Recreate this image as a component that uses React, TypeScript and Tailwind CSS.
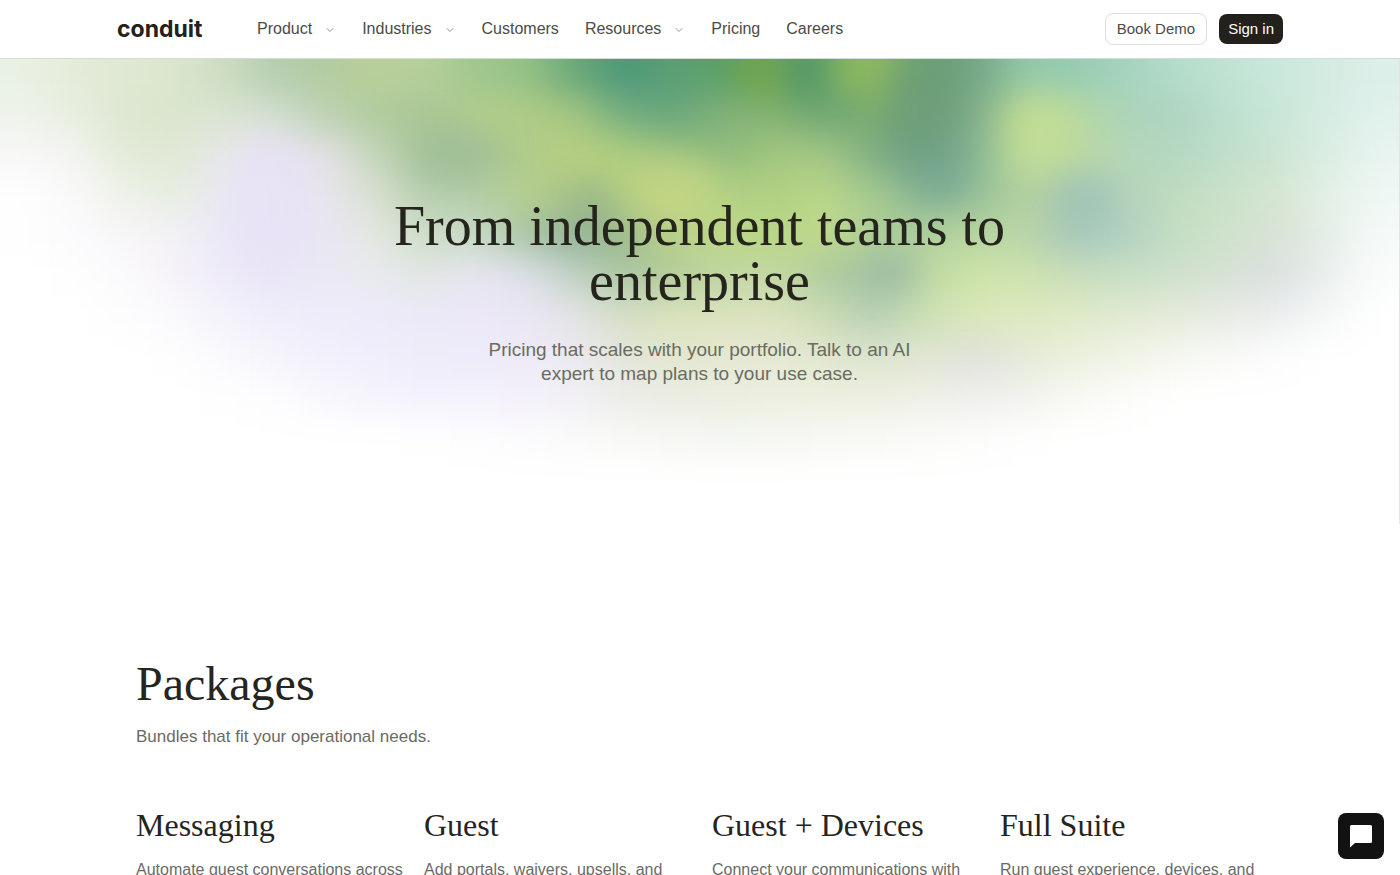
import { ChevronDown } from "lucide-react";

const NAV_ITEMS = [
  { label: "Product", menu: true },
  { label: "Industries", menu: true },
  { label: "Customers", menu: false },
  { label: "Resources", menu: true },
  { label: "Pricing", menu: false },
  { label: "Careers", menu: false },
];

const PACKAGES = [
  { name: "Messaging", text: "Automate guest conversations across" },
  { name: "Guest", text: "Add portals, waivers, upsells, and" },
  { name: "Guest + Devices", text: "Connect your communications with" },
  { name: "Full Suite", text: "Run guest experience, devices, and" },
];

// colour mesh for the hero, one row per 40 units, one colour per 50 units
const MESH = [
  "e9f1e4 e4ecd9 dfe8d2 dce6cf cddcc0 b4cdb0 b3cca0 b9cf98 b7d09a 9fc78f 95c286 6aa878 4b977a 5aa074 5b9f68 76a855 5f9f6c 8eb85f 6aa176 71a583 94c8a9 96ccb2 a4d3bd b3dccb bfe2d3 c9e8db d3ebe0 ddefe9",
  "eef3ea e8eee0 dce7d0 dae5cd dbe5d3 d3dfd0 bed1b4 b0cb9e a9c695 b4ce8d b2cd86 a5c784 74ad80 6aa67c 84b37b 84b373 6fa775 7aac70 719f7a 80ae8c bcd991 b8d9a0 add3b8 aed3bf bcdfcd c8e6d8 d5ece2 e1f1ec",
  "f8f8f8 f4f4f2 e2ebd7 e0e9d4 e8e7ea e6e2f2 e4e2e6 c6d6bb a6c49a a0bf96 b0cb8b b9d07f b2cf7f 9fc481 8fbb7c a3c87f a5c885 7fae85 71a38c 86b594 bfdc98 bcd99f b4d6b8 b5d8c3 bedec9 cbe5d2 daede1 e9f4f0",
  "fefefe fbf9fb eef1e8 e7eee1 eae8f4 e7e2f5 e9e6f0 d8e0d1 b7cfae b3cda9 b6cf8f a8c386 b9d081 c6d784 b5d286 b0d082 bbd78a a4ca90 87b394 96be99 b3d19f a9c9b0 b2d2bb bfdcbf cae1c9 d6e5d0 e2efe5 eff7f4",
  "fefefe fcfbfd f8f6f8 f2f1f5 ebe8f7 e7e3f5 e9e6f2 e5e8e1 ccdcc8 c9dbc7 a8c4a4 93b39a 9dbb8d bbd286 bdd688 bad785 c0d98c b0cf96 b0d09c b8d5a0 bbd6a8 a6c7bc b0d0c2 c3dec3 cfe3cb d8e2d5 e4ede6 f5faf8",
  "ffffff fefefe fbfafc f5f3f8 eeebf9 eae7f7 ebe9f6 e9eaef e2e7e2 e7e5f2 e0e0ec c0d2c2 abc5a2 b3cd9b c0d6a4 c2d7a2 b0cca0 a0c0a2 bdd8a4 cfe4a8 cfe3ae c9deba c9dfc5 cfe0cb d6e1d5 dbe0df e9efed fafcfb",
  "ffffff ffffff fdfdfe faf9fc f4f2fb efedfa eeecfa edebfa ece9f8 ece8f8 ebe7f5 e4e4e6 d5dfc5 dbe3bd dbe3bd dce3c1 cbdbb4 b7cfb4 cce0b4 dae8ba dde9c0 e0eac8 e1ead1 e5ebda e8ebe4 ebedee f6f7f7 ffffff",
  "ffffff ffffff ffffff fefefe faf9fd f5f4fc f2f0fb f0eefb efecfa eeebfa eeebf8 ebe9f2 e3e6d8 e3e7cf e5e8d2 e6e8d3 e1e8cf dbe4cd e0e6d2 dee0da e5ead8 ebf0dc f0f3e6 f5f7ef f9faf7 fcfcfc ffffff ffffff",
  "ffffff ffffff ffffff ffffff fefefe fdfcfe f8f7fd f5f3fc f3f1fc f3f1fb f3f0fa f1eff5 ebece6 eaece2 ebeddf ecefdf ecefde edefe1 eeefe5 efeeee f1f2ec f8f9f3 fcfcfa ffffff ffffff ffffff ffffff ffffff",
  "ffffff ffffff ffffff ffffff ffffff ffffff ffffff ffffff fefeff fdfdfe fcfbfd fafafa f8f8f6 f6f7f3 f4f6f2 f5f6f2 f7f8f4 f8f9f5 fafaf8 fcfcfb fefefe ffffff ffffff ffffff ffffff ffffff ffffff ffffff",
  "ffffff ffffff ffffff ffffff ffffff ffffff ffffff ffffff ffffff ffffff ffffff ffffff ffffff ffffff ffffff ffffff ffffff ffffff ffffff ffffff ffffff ffffff ffffff ffffff ffffff ffffff ffffff ffffff",
].map((row) => row.split(" "));

const SPOTS = [
  { x: 757, y: 8, rx: 20, ry: 30, color: "#70a548" },
  { x: 803, y: 10, rx: 18, ry: 34, color: "#48906a" },
  { x: 855, y: 6, rx: 22, ry: 26, color: "#96be5c" },
  { x: 925, y: 50, rx: 34, ry: 60, color: "#6b9c78" },
  { x: 942, y: 115, rx: 26, ry: 24, color: "#72a590" },
  { x: 1042, y: 72, rx: 30, ry: 34, color: "#c6df95" },
  { x: 1086, y: 140, rx: 28, ry: 26, color: "#9dc0b8" },
  { x: 895, y: 212, rx: 22, ry: 24, color: "#98b8a4" },
  { x: 594, y: 148, rx: 22, ry: 26, color: "#8fb08c" },
  { x: 450, y: 92, rx: 34, ry: 30, color: "#9fbe98" },
  { x: 680, y: 122, rx: 40, ry: 20, color: "#c6d784" },
  { x: 268, y: 150, rx: 36, ry: 76, color: "#e8e2f6" },
];

function HeroGradient() {
  return (
    <svg
      className="absolute inset-0 h-full w-full"
      viewBox="0 0 1400 464"
      preserveAspectRatio="none"
      aria-hidden="true"
    >
      <defs>
        <filter
          id="mesh"
          filterUnits="userSpaceOnUse"
          x="-150"
          y="-100"
          width="1700"
          height="700"
          colorInterpolationFilters="sRGB"
        >
          <feGaussianBlur stdDeviation="22 17" />
        </filter>
        <filter
          id="spots"
          filterUnits="userSpaceOnUse"
          x="-150"
          y="-100"
          width="1700"
          height="700"
          colorInterpolationFilters="sRGB"
        >
          <feGaussianBlur stdDeviation="15" />
        </filter>
      </defs>
      <g filter="url(#mesh)">
        {MESH.map((row, r) =>
          row.map((color, c) => {
            // the outer cells run past the edge, so that the blur stays opaque there
            const left = c === 0 ? -100 : c * 50;
            const right = c === row.length - 1 ? 1500 : c * 50 + 51;
            const top = r === 0 ? -80 : r * 40 - 4;
            const bottom = r === MESH.length - 1 ? 560 : r * 40 + 37;
            return (
              <rect
                key={r + "-" + c}
                x={left}
                y={top}
                width={right - left}
                height={bottom - top}
                fill={"#" + color}
              />
            );
          })
        )}
      </g>
      <g filter="url(#spots)" opacity="0.6">
        {SPOTS.map((s) => (
          <ellipse key={s.x} cx={s.x} cy={s.y} rx={s.rx} ry={s.ry} fill={s.color} />
        ))}
      </g>
    </svg>
  );
}

function Header() {
  return (
    <header className="border-b border-[#d5dcd7] bg-white">
      <div className="mx-auto flex h-[58px] max-w-[1166px] items-center">
        <a
          href="#"
          className="w-[140px] font-[Inter,sans-serif] text-[23px] leading-[30px] font-bold text-[#22211c]"
        >
          conduit
        </a>
        <nav className="flex items-center gap-[26px] text-base text-[#4b4b47]">
          {NAV_ITEMS.map((item) =>
            item.menu ? (
              <button key={item.label} className="flex items-center gap-3">
                {item.label}
                <ChevronDown size={12} strokeWidth={2} className="mt-[2px] text-[#94948f]" />
              </button>
            ) : (
              <a key={item.label} href="#">
                {item.label}
              </a>
            )
          )}
        </nav>
        <div className="ml-auto flex items-center gap-3">
          <button className="h-8 rounded-lg border border-[#dededc] px-[11px] text-[15px] text-[#4b4b47]">
            Book Demo
          </button>
          <button className="h-[30px] rounded-lg bg-[#22211c] px-[9px] text-[15px] text-white">Sign in</button>
        </div>
      </div>
    </header>
  );
}

export default function App() {
  return (
    <div className="h-screen overflow-hidden bg-white font-['Liberation_Sans',Arial,sans-serif]">
      <Header />
      <section className="relative h-[465px] border-r border-[#e3e6e4]">
        <HeroGradient />
        <div className="relative mx-auto max-w-[700px] pt-[140px] text-center">
          <h1 className="font-['Liberation_Serif',serif] text-[56px] leading-[55px] text-[#25251d]">
            From independent teams to enterprise
          </h1>
          <p className="mx-auto mt-[29px] max-w-[460px] text-[19px] leading-6 text-[#6a6c62]">
            Pricing that scales with your portfolio. Talk to an AI expert to map plans to your use case.
          </p>
        </div>
      </section>

      <section className="mx-auto max-w-[1128px] pt-[132px] text-[#6a6a66]">
        <h2 className="font-['Liberation_Serif',serif] text-5xl leading-[56px] text-[#25251f]">Packages</h2>
        <p className="mt-[13px] text-[17px] leading-6">Bundles that fit your operational needs.</p>
        <div className="mt-14 grid grid-cols-4 gap-6">
          {PACKAGES.map((p) => (
            <article key={p.name}>
              <h3 className="font-['Liberation_Serif',serif] text-[32px] leading-10 text-[#25251f]">{p.name}</h3>
              <p className="mt-[13px] text-base whitespace-nowrap">{p.text}</p>
            </article>
          ))}
        </div>
      </section>

      <button
        aria-label="Open chat"
        className="fixed right-4 bottom-4 flex h-[46px] w-[46px] items-center justify-center rounded-lg bg-[#121212] text-white"
      >
        <svg viewBox="0 0 24 24" className="h-6 w-6" fill="currentColor" aria-hidden="true">
          <path d="M2.500 1h19A1.500 1.500 0 0 1 23 2.500v15A1.500 1.500 0 0 1 21.500 19H6l-5 4.500V2.500A1.500 1.500 0 0 1 2.500 1z" />
        </svg>
      </button>
    </div>
  );
}
